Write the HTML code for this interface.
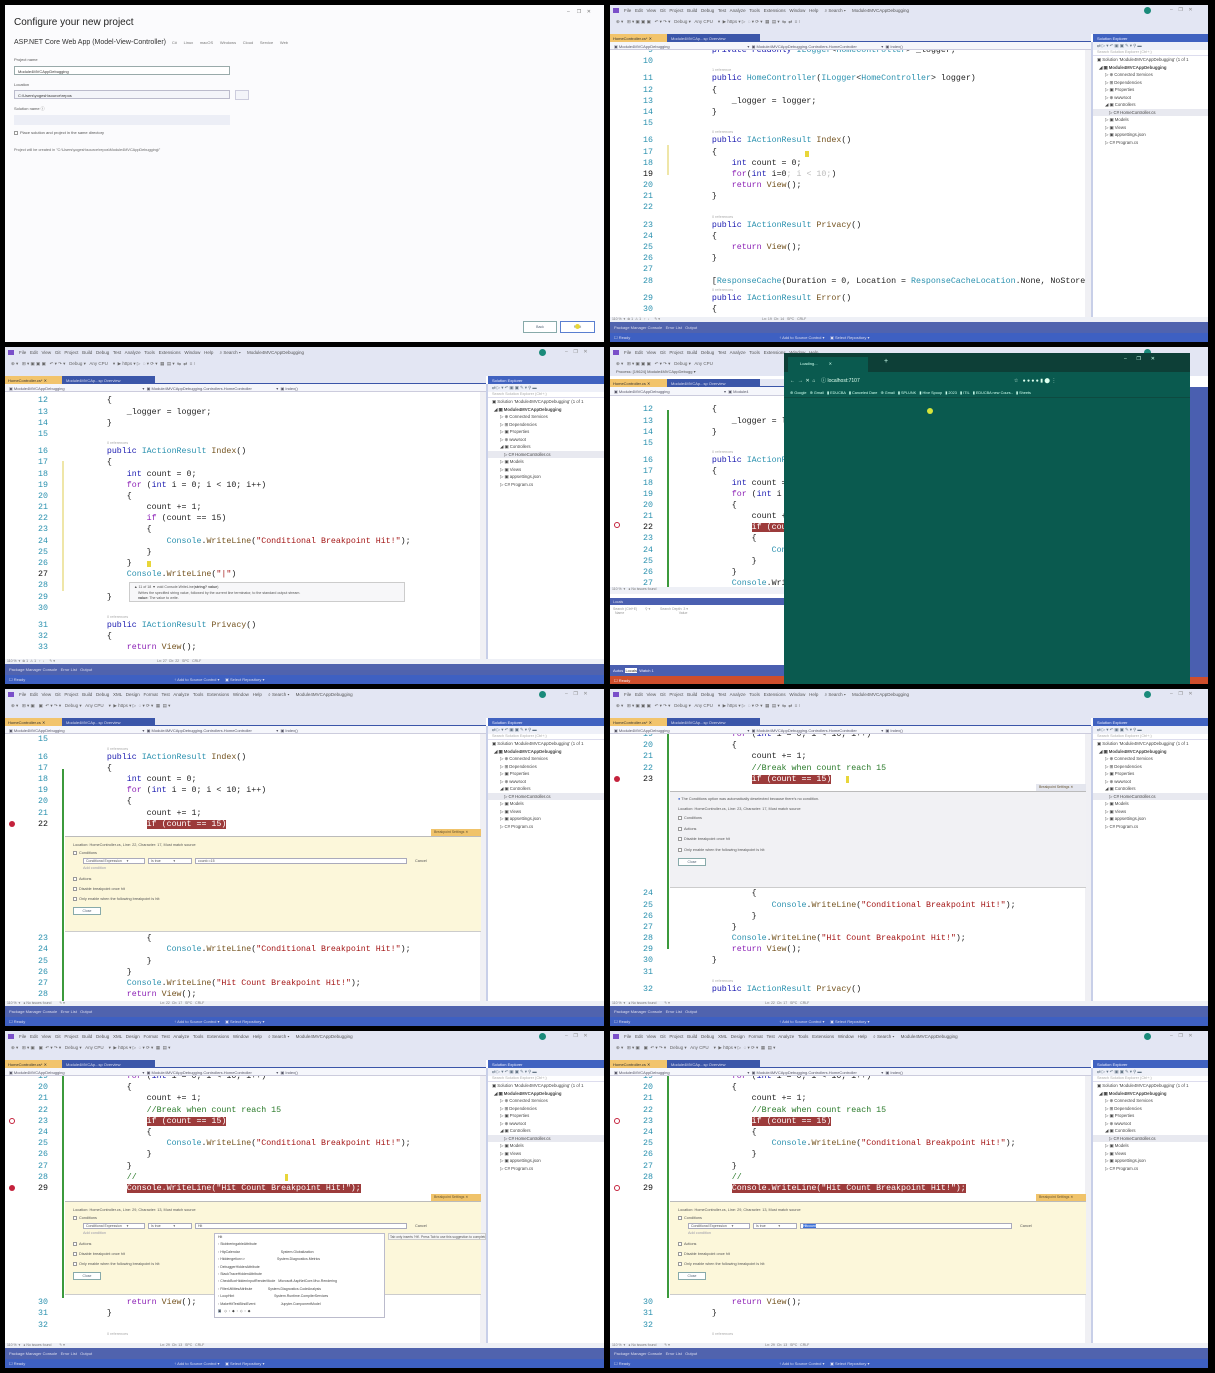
<!DOCTYPE html>
<html><head><meta charset="utf-8">
<style>
*{margin:0;padding:0;box-sizing:border-box}
body{width:1215px;height:1373px;background:#000;position:relative;overflow:hidden;font-family:"Liberation Sans",sans-serif}
.vs{position:absolute;width:599px;height:337px;background:#fff;overflow:hidden}
.menu{position:absolute;left:0;top:0;width:100%;height:29px;background:#e3e6f3}
.mt{position:absolute;left:14px;top:3px;font-size:4.5px;color:#555;white-space:pre}
.tt{position:absolute;left:6px;top:14px;font-size:4.5px;color:#666;white-space:pre}
.logo{position:absolute;left:3px;top:3px;width:6px;height:5px;background:#7a4fc9}
.av{position:absolute;left:534px;top:2px;width:7px;height:7px;border-radius:50%;background:#1a8a7a}
.wc{position:absolute;left:560px;top:2px;font-size:5px;color:#888;white-space:pre}
.tabs{position:absolute;left:0;top:29px;width:481px;height:8px;background:#e3e6f3;border-bottom:1px solid #3a55a8}
.t1{position:absolute;left:0;top:0;width:57px;height:8px;background:#f2c46c;font-size:4px;color:#333;padding:2px 3px;white-space:nowrap}
.t2{position:absolute;left:57px;top:0;width:93px;height:8px;background:#3b56a9;font-size:4px;color:#dde;padding:2px 4px;white-space:nowrap}
.seh{position:absolute;left:483px;top:29px;width:116px;height:8px;background:#4062c0;font-size:4px;color:#eef;padding:2px 4px}
.nav{position:absolute;left:0;top:37px;width:481px;height:8px;background:#f5f6fb;border-bottom:1px solid #ccd;font-size:4px;color:#556;white-space:pre;padding:2px 4px;overflow:hidden}
.ed{position:absolute;left:0;top:45px;width:481px;height:267px;background:#fff;overflow:hidden}
.vsb{position:absolute;right:0;top:0;width:6px;height:100%;background:#f0f0f4}
.sep{position:absolute;left:481px;top:37px;width:2px;height:275px;background:#c8cfe8}
.se{position:absolute;left:483px;top:37px;width:116px;height:275px;background:#fff;font-size:4.3px;color:#444;white-space:nowrap;overflow:hidden}
.se .tb2{height:8px;background:#eef0f8;padding:1px 4px;color:#678}
.se .sr{height:6px;border-bottom:1px solid #dde;color:#aaa;padding:0 4px;font-size:3.8px}
.se div.i{height:7.5px;line-height:7.5px}
.hs{position:absolute;left:0;top:312px;width:100%;height:5px;background:#eef0f6;font-size:3.5px;color:#777;white-space:pre;overflow:hidden}
.ob{position:absolute;left:0;top:317px;width:100%;height:11px;background:#5063ae;font-size:4px;color:#dde;padding:3px 4px;white-space:pre}
.sb{position:absolute;left:0;top:328px;width:100%;height:9px;background:#3e60c2;font-size:4px;color:#dde;padding:2px 4px;white-space:pre}
.code{position:absolute;left:0;font:8.3px/11.2px "Liberation Mono",monospace;color:#222;white-space:normal;width:481px}
.l{height:11.2px;padding-left:62px;position:relative;white-space:pre}
.n{position:absolute;left:0;width:43px;text-align:right;color:#2b91af}
.cl{height:6px;font:3.8px/6px "Liberation Sans",sans-serif;color:#aaa;padding-left:102px}
.k{color:#1a1ab0}.c2{color:#8b1fb5}.t{color:#2b91af}.s{color:#a31515}.m{color:#74531f}.g{color:#2a7a2a}
.bp{background:#9c3b3b;color:#fff}
.dot{position:absolute;left:4px;width:6px;height:6px;border-radius:50%;background:#c4223c}
.ring{position:absolute;left:4px;width:6px;height:6px;border-radius:50%;border:1.5px solid #c4223c;background:#fff}
.gb{position:absolute;left:57px;width:2px;background:#3c9a3c}
.yb{position:absolute;left:57px;width:2px;background:#efe6a8}
.pk{margin-left:60px;width:416px;background:#fcf7da;border-top:1px solid #bbb;border-bottom:1px solid #ccc;position:relative;font:3.8px "Liberation Sans",sans-serif;color:#555;white-space:normal}
.pk.gr{background:#f1f1f4}
.pk .x{position:absolute;left:8px;white-space:pre}
.bs{position:absolute;right:0;top:-8px;width:50px;height:7px;background:#f0c36a;font-size:3.5px;color:#653;padding:1.5px 3px;white-space:nowrap}
.cb{display:inline-block;width:4px;height:4px;border:0.6px solid #999;background:#fff;vertical-align:middle;margin-right:2px}
.btn{position:absolute;width:20px;height:8px;border:1px solid #8aa;background:#fff;font-size:3.5px;text-align:center;line-height:6px;color:#567}
.inp{position:absolute;height:6px;background:#fff;border:0.6px solid #aab;font-size:3.5px;line-height:5px;padding-left:2px;white-space:pre}
</style></head><body>

<!-- Panel 1: dialog -->
<div class="vs" style="left:5px;top:5px;background:#fbfbfd">
 <div style="position:absolute;left:562px;top:4px;font-size:5px;color:#777;white-space:pre">–     ❐    ✕</div>
 <div style="position:absolute;left:9px;top:12px;font-size:10px;color:#222">Configure your new project</div>
 <div style="position:absolute;left:9px;top:34px;font-size:7px;color:#333;white-space:pre">ASP.NET Core Web App (Model-View-Controller)   <span style="font-size:4px;color:#777">C#      Linux      macOS      Windows      Cloud      Service      Web</span></div>
 <div style="position:absolute;left:9px;top:52px;font-size:4px;color:#555">Project name</div>
 <div style="position:absolute;left:9px;top:61px;width:216px;height:9px;border:1px solid #9aa;background:#fff;font-size:4px;padding:2px 3px;color:#333">Module4MVCAppDebugging</div>
 <div style="position:absolute;left:9px;top:77px;font-size:4px;color:#555">Location</div>
 <div style="position:absolute;left:9px;top:85px;width:216px;height:9px;border:1px solid #bbc;background:#f3f4f9;font-size:4px;padding:2px 3px;color:#333">C:\Users\yogesh\source\repos</div>
 <div style="position:absolute;left:230px;top:85px;width:14px;height:10px;border:1px solid #ccd;background:#f3f4f9"></div>
 <div style="position:absolute;left:9px;top:101px;font-size:4px;color:#555">Solution name ⓘ</div>
 <div style="position:absolute;left:9px;top:110px;width:216px;height:10px;background:#eceef6"></div>
 <div style="position:absolute;left:9px;top:125px;font-size:4px;color:#555"><span class="cb"></span>Place solution and project in the same directory</div>
 <div style="position:absolute;left:9px;top:143px;font-size:3.8px;color:#666">Project will be created in "C:\Users\yogesh\source\repos\Module4MVCAppDebugging\"</div>
 <div class="btn" style="left:518px;top:316px;width:34px;height:12px;line-height:10px">Back</div>
 <div class="btn" style="left:555px;top:316px;width:35px;height:12px;line-height:10px;border-color:#5a7fd0">Next</div>
 <div style="position:absolute;left:570px;top:319px;width:5px;height:5px;border-radius:50%;background:#e8d63a"></div>
</div>

<!-- Panel 2 -->
<div class="vs" style="left:610px;top:5px;width:598px">
 <div class="menu"><div class="logo"></div><div class="mt">File   Edit   View   Git   Project   Build   Debug   Test   Analyze   Tools   Extensions   Window   Help     ⌕ Search ▾     Module4MVCAppDebugging</div><div class="tt">⊕ ▾   ⊞ ▾ ▣ ▣ ▣   ↶ ▾ ↷ ▾   Debug ▾   Any CPU    ▾  ▶ https ▾ ▷  ◌ ▾ ⟳ ▾  ▦  ▤ ▾  ⇆  ⇄  ≡ ⁝</div><div class="av"></div><div class="wc">–    ❐    ✕</div></div>
 <div class="tabs"><div class="t1">HomeController.cs*  ✕</div><div class="t2">Module4MVCAp...sp Overview</div></div>
 <div class="seh">Solution Explorer</div>
 <div class="nav">▣ Module4MVCAppDebugging                                                                      ▾  ▣ Module4MVCAppDebugging.Controllers.HomeController                      ▾  ▣ Index()</div>
 <div class="ed"><div class="vsb"></div><div class="yb" style="top:95px;height:30px"></div>
  <div class="code" style="top:-5px">
<div class="l"><span class="n">9</span>        <span class="k">private readonly</span> <span class="t">ILogger</span>&lt;<span class="t">HomeController</span>&gt; _logger;</div>
<div class="l"><span class="n">10</span></div>
<div class="cl">1 reference</div>
<div class="l"><span class="n">11</span>        <span class="k">public</span> <span class="t">HomeController</span>(<span class="t">ILogger</span>&lt;<span class="t">HomeController</span>&gt; logger)</div>
<div class="l"><span class="n">12</span>        {</div>
<div class="l"><span class="n">13</span>            _logger = logger;</div>
<div class="l"><span class="n">14</span>        }</div>
<div class="l"><span class="n">15</span></div>
<div class="cl">0 references</div>
<div class="l"><span class="n">16</span>        <span class="k">public</span> <span class="t">IActionResult</span> <span class="m">Index</span>()</div>
<div class="l"><span class="n">17</span>        {</div>
<div class="l"><span class="n">18</span>            <span class="k">int</span> count = 0;</div>
<div class="l"><span class="n" style="color:#111">19</span>            <span class="c2">for</span>(<span class="k">int</span> i=0<span style="color:#bbb">; i &lt; 10;</span>)</div>
<div class="l"><span class="n">20</span>            <span class="c2">return</span> <span class="m">View</span>();</div>
<div class="l"><span class="n">21</span>        }</div>
<div class="l"><span class="n">22</span></div>
<div class="cl">0 references</div>
<div class="l"><span class="n">23</span>        <span class="k">public</span> <span class="t">IActionResult</span> <span class="m">Privacy</span>()</div>
<div class="l"><span class="n">24</span>        {</div>
<div class="l"><span class="n">25</span>            <span class="c2">return</span> <span class="m">View</span>();</div>
<div class="l"><span class="n">26</span>        }</div>
<div class="l"><span class="n">27</span></div>
<div class="l"><span class="n">28</span>        [<span class="t">ResponseCache</span>(Duration = 0, Location = <span class="t">ResponseCacheLocation</span>.None, NoStore</div>
<div class="cl">0 references</div>
<div class="l"><span class="n">29</span>        <span class="k">public</span> <span class="t">IActionResult</span> <span class="m">Error</span>()</div>
<div class="l"><span class="n">30</span>        {</div>
  </div>
  <div style="position:absolute;left:195px;top:101px;width:4px;height:6px;background:#e8d63a"></div>
 </div>
 <div class="sep"></div>
 <div class="se"><div class="tb2">⇄ ▷ ▾ ↶ ▣ ▣  ✎ ▾  ⚲ ▬</div><div class="sr">Search Solution Explorer (Ctrl+;)</div>
  <div class="i" style="padding-left:4px">▣ Solution 'Module4MVCAppDebugging' (1 of 1</div>
  <div class="i" style="padding-left:6px;font-weight:bold">◢ ▣ Module4MVCAppDebugging</div>
  <div class="i" style="padding-left:12px">▷ ⊕ Connected Services</div>
  <div class="i" style="padding-left:12px">▷ ⊞ Dependencies</div>
  <div class="i" style="padding-left:12px">▷ ▣ Properties</div>
  <div class="i" style="padding-left:12px">▷ ⊕ wwwroot</div>
  <div class="i" style="padding-left:12px">◢ ▣ Controllers</div>
  <div class="i" style="padding-left:16px;background:#e8e9f0">▷ C# HomeController.cs</div>
  <div class="i" style="padding-left:12px">▷ ▣ Models</div>
  <div class="i" style="padding-left:12px">▷ ▣ Views</div>
  <div class="i" style="padding-left:12px">▷ ▣ appsettings.json</div>
  <div class="i" style="padding-left:12px">▷ C# Program.cs</div>
 </div>
 <div class="hs">  110 %  ▾  ⊗ 1  ⚠ 1   ↑  ↓     ✎ ▾                                                                                                         Ln: 19  Ch: 14   SPC   CRLF</div>
 <div class="ob">Package Manager Console   Error List   Output</div>
 <div class="sb">☐ Ready                                                                                                                                      ↑ Add to Source Control ▾     ▣ Select Repository ▾</div>
</div>

<!-- Panel 3 -->
<div class="vs" style="left:5px;top:347px">
 <div class="menu"><div class="logo"></div><div class="mt">File   Edit   View   Git   Project   Build   Debug   Test   Analyze   Tools   Extensions   Window   Help     ⌕ Search ▾     Module4MVCAppDebugging</div><div class="tt">⊕ ▾   ⊞ ▾ ▣ ▣ ▣   ↶ ▾ ↷ ▾   Debug ▾   Any CPU    ▾  ▶ https ▾ ▷  ◌ ▾ ⟳ ▾  ▦  ▤ ▾  ⇆  ⇄  ≡ ⁝</div><div class="av"></div><div class="wc">–    ❐    ✕</div></div>
 <div class="tabs"><div class="t1">HomeController.cs*  ✕</div><div class="t2">Module4MVCAp...sp Overview</div></div>
 <div class="seh">Solution Explorer</div>
 <div class="nav">▣ Module4MVCAppDebugging                                                                      ▾  ▣ Module4MVCAppDebugging.Controllers.HomeController                      ▾  ▣ Index()</div>
 <div class="ed"><div class="vsb"></div><div class="yb" style="top:69px;height:130px"></div>
  <div class="code" style="top:3.4px">
<div class="l"><span class="n">12</span>        {</div>
<div class="l"><span class="n">13</span>            _logger = logger;</div>
<div class="l"><span class="n">14</span>        }</div>
<div class="l"><span class="n">15</span></div>
<div class="cl">0 references</div>
<div class="l"><span class="n">16</span>        <span class="k">public</span> <span class="t">IActionResult</span> <span class="m">Index</span>()</div>
<div class="l"><span class="n">17</span>        {</div>
<div class="l"><span class="n">18</span>            <span class="k">int</span> count = 0;</div>
<div class="l"><span class="n">19</span>            <span class="c2">for</span> (<span class="k">int</span> i = 0; i &lt; 10; i++)</div>
<div class="l"><span class="n">20</span>            {</div>
<div class="l"><span class="n">21</span>                count += 1;</div>
<div class="l"><span class="n">22</span>                <span class="c2">if</span> (count == 15)</div>
<div class="l"><span class="n">23</span>                {</div>
<div class="l"><span class="n">24</span>                    <span class="t">Console</span>.<span class="m">WriteLine</span>(<span class="s">"Conditional Breakpoint Hit!"</span>);</div>
<div class="l"><span class="n">25</span>                }</div>
<div class="l"><span class="n">26</span>            }</div>
<div class="l"><span class="n" style="color:#111">27</span>            <span class="t">Console</span>.<span class="m">WriteLine</span>(<span class="s">"|"</span>)</div>
<div class="l"><span class="n">28</span></div>
<div class="l"><span class="n">29</span>        }</div>
<div class="l"><span class="n">30</span></div>
<div class="cl">0 references</div>
<div class="l"><span class="n">31</span>        <span class="k">public</span> <span class="t">IActionResult</span> <span class="m">Privacy</span>()</div>
<div class="l"><span class="n">32</span>        {</div>
<div class="l"><span class="n">33</span>            <span class="c2">return</span> <span class="m">View</span>();</div>
  </div>
  <div style="position:absolute;left:124px;top:190px;width:276px;height:20px;background:#f7f7f9;border:1px solid #ccc;font-size:3.6px;color:#555;padding:2px 4px;line-height:5.5px;white-space:pre">▲ 11 of 18 ▼ void Console.WriteLine(<b>string? value</b>)
    Writes the specified string value, followed by the current line terminator, to the standard output stream.
    <b>value:</b> The value to write.</div>
  <div style="position:absolute;left:142px;top:169px;width:4px;height:6px;background:#e8d63a"></div>
 </div>
 <div class="sep"></div>
 <div class="se"><div class="tb2">⇄ ▷ ▾ ↶ ▣ ▣  ✎ ▾  ⚲ ▬</div><div class="sr">Search Solution Explorer (Ctrl+;)</div>
  <div class="i" style="padding-left:4px">▣ Solution 'Module4MVCAppDebugging' (1 of 1</div>
  <div class="i" style="padding-left:6px;font-weight:bold">◢ ▣ Module4MVCAppDebugging</div>
  <div class="i" style="padding-left:12px">▷ ⊕ Connected Services</div>
  <div class="i" style="padding-left:12px">▷ ⊞ Dependencies</div>
  <div class="i" style="padding-left:12px">▷ ▣ Properties</div>
  <div class="i" style="padding-left:12px">▷ ⊕ wwwroot</div>
  <div class="i" style="padding-left:12px">◢ ▣ Controllers</div>
  <div class="i" style="padding-left:16px;background:#e8e9f0">▷ C# HomeController.cs</div>
  <div class="i" style="padding-left:12px">▷ ▣ Models</div>
  <div class="i" style="padding-left:12px">▷ ▣ Views</div>
  <div class="i" style="padding-left:12px">▷ ▣ appsettings.json</div>
  <div class="i" style="padding-left:12px">▷ C# Program.cs</div>
 </div>
 <div class="hs">  110 %  ▾  ⊗ 1  ⚠ 1   ↑  ↓     ✎ ▾                                                                                                         Ln: 27  Ch: 22   SPC   CRLF</div>
 <div class="ob">Package Manager Console   Error List   Output</div>
 <div class="sb">☐ Ready                                                                                                                                      ↑ Add to Source Control ▾     ▣ Select Repository ▾</div>
</div>

<!-- Panel 4 -->
<div class="vs" style="left:610px;top:347px;width:598px">
 <div class="menu"><div class="logo"></div><div class="mt">File   Edit   View   Git   Project   Build   Debug   Test   Analyze   Tools   Extensions   Window   Help</div><div class="tt">⊕ ▾   ⊞ ▾ ▣ ▣ ▣   ↶ ▾ ↷ ▾   Debug ▾   Any CPU</div><div class="av"></div></div>
 <div style="position:absolute;left:0;top:22px;width:200px;height:7px;font-size:4px;color:#555;padding-left:6px;background:#e3e6f3">Process: [19624] Module4MVCAppDebugg ▾</div>
 <div class="tabs" style="top:32px"><div class="t1">HomeController.cs  ✕</div><div class="t2">Module4MVCAp...sp Overview</div></div>
 <div class="nav" style="top:40px;height:9px">▣ Module4MVCAppDebugging                                                 ▾  ▣ Module4</div>
 <div class="ed" style="top:49px;height:191px"><div class="gb" style="top:14px;height:180px"></div>
  <div class="code" style="top:8.4px">
<div class="l"><span class="n">12</span>        {</div>
<div class="l"><span class="n">13</span>            _logger = logger;</div>
<div class="l"><span class="n">14</span>        }</div>
<div class="l"><span class="n">15</span></div>
<div class="cl">0 references</div>
<div class="l"><span class="n">16</span>        <span class="k">public</span> <span class="t">IActionResult</span> Index()</div>
<div class="l"><span class="n">17</span>        {</div>
<div class="l"><span class="n">18</span>            <span class="k">int</span> count = 0;</div>
<div class="l"><span class="n">19</span>            <span class="c2">for</span> (<span class="k">int</span> i = 0;</div>
<div class="l"><span class="n">20</span>            {</div>
<div class="l"><span class="n">21</span>                count += 1;</div>
<div class="l"><span class="n" style="color:#111">22</span>                <span class="bp">if (count == 15)</span></div>
<div class="l"><span class="n">23</span>                {</div>
<div class="l"><span class="n">24</span>                    <span class="t">Console</span></div>
<div class="l"><span class="n">25</span>                }</div>
<div class="l"><span class="n">26</span>            }</div>
<div class="l"><span class="n">27</span>            <span class="t">Console</span>.WriteLine</div>
  </div>
  <div class="ring" style="top:126px"></div>
 </div>
 <div class="hs" style="top:240px;height:7px">  110 %  ▾   ● No issues found</div>
 <div style="position:absolute;left:0;top:251px;width:598px;height:7px;background:#4a5fb0;font-size:3.5px;color:#dde;padding:1.5px 3px">Locals</div>
 <div style="position:absolute;left:0;top:258px;width:598px;height:60px;background:#fff;font-size:3.5px;color:#999;white-space:pre;padding:2px 3px">Search (Ctrl+E)        ⚲ ▾          Search Depth: 3 ▾
  Name                                                        Value</div>
 <div style="position:absolute;left:0;top:318px;width:598px;height:11px;background:#4a5fb0;font-size:4px;color:#eef;padding:3px 3px;white-space:pre">Autos  <span style="background:#fff;color:#333">Locals</span>  Watch 1</div>
 <div style="position:absolute;left:0;top:329px;width:598px;height:8px;background:#cf4e2c;font-size:4px;color:#fee;padding:2px 4px">☐ Ready</div>
 <div style="position:absolute;left:580px;top:40px;width:18px;height:290px;background:#4a5fb0"></div>
 <!-- browser -->
 <div style="position:absolute;left:174px;top:6px;width:406px;height:331px;background:#0a5a4f">
  <div style="height:19px;background:#0d3f37;position:relative">
   <div style="position:absolute;left:4px;top:4px;width:80px;height:15px;background:#0a5a4f;font-size:4px;color:#cfe;padding:4px 12px;white-space:pre">Loading...          ✕</div>
   <div style="position:absolute;left:100px;top:5px;font-size:7px;color:#cfe">+</div>
   <div style="position:absolute;left:340px;top:3px;font-size:5px;color:#cfe;white-space:pre">–       ❐       ✕</div>
  </div>
  <div style="height:15px;position:relative;font-size:5px;color:#dfe;white-space:pre;padding:5px 6px">←  →  ✕  ⌂    ⓘ localhost:7107                                                                                                               ☆   ● ● ● ● ▮ ⬤ ⋮</div>
  <div style="height:11px;font-size:3.8px;color:#cfe;white-space:pre;padding:3px 6px;border-bottom:1px solid #0d4a40">⊕ Google   ⊕ Gmail   ▮ EDUCBA   ▮ Canceled Dare   ⊕ Gmail   ▮ SPLUNK   ▮ Hive Spoop   ▮ 2023   ▮ ITIL   ▮ EDUCBA new Cours..   ▮ Sheets</div>
  <div style="position:absolute;left:143px;top:55px;width:6px;height:6px;border-radius:50%;background:#d6e43a"></div>
 </div>
</div>

<!-- Panel 5 -->
<div class="vs" style="left:5px;top:689px">
 <div class="menu"><div class="logo"></div><div class="mt">File   Edit   View   Git   Project   Build   Debug   XML   Design   Format   Test   Analyze   Tools   Extensions   Window   Help     ⌕ Search ▾     Module4MVCAppDebugging</div><div class="tt">⊕ ▾   ⊞ ▾ ▣   ▣  ↶ ▾ ↷ ▾   Debug ▾   Any CPU    ▾  ▶ https ▾ ▷  ◌ ▾ ⟳ ▾  ▦  ▤ ▾</div><div class="av"></div><div class="wc">–    ❐    ✕</div></div>
 <div class="tabs"><div class="t1">HomeController.cs  ✕</div><div class="t2">Module4MVCAp...sp Overview</div></div>
 <div class="seh">Solution Explorer</div>
 <div class="nav">▣ Module4MVCAppDebugging                                                                      ▾  ▣ Module4MVCAppDebugging.Controllers.HomeController                      ▾  ▣ Index()</div>
 <div class="ed"><div class="vsb"></div><div class="gb" style="top:35px;height:232px"></div>
  <div class="code" style="top:0.4px">
<div class="l"><span class="n">15</span></div>
<div class="cl">0 references</div>
<div class="l"><span class="n">16</span>        <span class="k">public</span> <span class="t">IActionResult</span> <span class="m">Index</span>()</div>
<div class="l"><span class="n">17</span>        {</div>
<div class="l"><span class="n">18</span>            <span class="k">int</span> count = 0;</div>
<div class="l"><span class="n">19</span>            <span class="c2">for</span> (<span class="k">int</span> i = 0; i &lt; 10; i++)</div>
<div class="l"><span class="n">20</span>            {</div>
<div class="l"><span class="n">21</span>                count += 1;</div>
<div class="l"><span class="n" style="color:#111">22</span>                <span class="bp">if (count == 15)</span></div>
<div style="height:6px"></div>
<div class="pk" style="height:96px"><div class="bs">Breakpoint Settings ✕</div>
<div class="x" style="top:6px">Location: HomeController.cs, Line: 22, Character: 17, Must match source</div>
<div class="x" style="top:14px"><span class="cb"></span>Conditions</div>
<div class="inp" style="left:18px;top:21px;width:62px">Conditional Expression     ▾</div>
<div class="inp" style="left:83px;top:21px;width:44px">Is true             ▾</div>
<div class="inp" style="left:130px;top:21px;width:212px">count==15</div>
<div class="x" style="left:350px;top:22px">Cancel</div>
<div class="x" style="left:18px;top:29px;color:#99a">Add condition</div>
<div class="x" style="top:40px"><span class="cb"></span>Actions</div>
<div class="x" style="top:50px"><span class="cb"></span>Disable breakpoint once hit</div>
<div class="x" style="top:60px"><span class="cb"></span>Only enable when the following breakpoint is hit:</div>
<div class="btn" style="left:8px;top:70px;width:28px">Close</div>
</div>
<div style="height:1.4px"></div>
<div class="l"><span class="n">23</span>                {</div>
<div class="l"><span class="n">24</span>                    <span class="t">Console</span>.<span class="m">WriteLine</span>(<span class="s">"Conditional Breakpoint Hit!"</span>);</div>
<div class="l"><span class="n">25</span>                }</div>
<div class="l"><span class="n">26</span>            }</div>
<div class="l"><span class="n">27</span>            <span class="t">Console</span>.<span class="m">WriteLine</span>(<span class="s">"Hit Count Breakpoint Hit!"</span>);</div>
<div class="l"><span class="n">28</span>            <span class="c2">return</span> <span class="m">View</span>();</div>
  </div>
  <div class="dot" style="top:87px"></div>
 </div>
 <div class="sep"></div>
 <div class="se"><div class="tb2">⇄ ▷ ▾ ↶ ▣ ▣  ✎ ▾  ⚲ ▬</div><div class="sr">Search Solution Explorer (Ctrl+;)</div>
  <div class="i" style="padding-left:4px">▣ Solution 'Module4MVCAppDebugging' (1 of 1</div>
  <div class="i" style="padding-left:6px;font-weight:bold">◢ ▣ Module4MVCAppDebugging</div>
  <div class="i" style="padding-left:12px">▷ ⊕ Connected Services</div>
  <div class="i" style="padding-left:12px">▷ ⊞ Dependencies</div>
  <div class="i" style="padding-left:12px">▷ ▣ Properties</div>
  <div class="i" style="padding-left:12px">▷ ⊕ wwwroot</div>
  <div class="i" style="padding-left:12px">◢ ▣ Controllers</div>
  <div class="i" style="padding-left:16px;background:#e8e9f0">▷ C# HomeController.cs</div>
  <div class="i" style="padding-left:12px">▷ ▣ Models</div>
  <div class="i" style="padding-left:12px">▷ ▣ Views</div>
  <div class="i" style="padding-left:12px">▷ ▣ appsettings.json</div>
  <div class="i" style="padding-left:12px">▷ C# Program.cs</div>
 </div>
 <div class="hs">  110 %  ▾   ● No issues found        ✎ ▾                                                                                                  Ln: 22  Ch: 17   SPC   CRLF</div>
 <div class="ob">Package Manager Console   Error List   Output</div>
 <div class="sb">☐ Ready                                                                                                                                      ↑ Add to Source Control ▾     ▣ Select Repository ▾</div>
</div>

<!-- Panel 6 -->
<div class="vs" style="left:610px;top:689px;width:598px">
 <div class="menu"><div class="logo"></div><div class="mt">File   Edit   View   Git   Project   Build   Debug   Test   Analyze   Tools   Extensions   Window   Help     ⌕ Search ▾     Module4MVCAppDebugging</div><div class="tt">⊕ ▾   ⊞ ▾ ▣ ▣ ▣   ↶ ▾ ↷ ▾   Debug ▾   Any CPU    ▾  ▶ https ▾ ▷  ◌ ▾ ⟳ ▾  ▦  ▤ ▾  ⇆  ⇄  ≡ ⁝</div><div class="av"></div><div class="wc">–    ❐    ✕</div></div>
 <div class="tabs"><div class="t1">HomeController.cs*  ✕</div><div class="t2">Module4MVCAp...sp Overview</div></div>
 <div class="seh">Solution Explorer</div>
 <div class="nav">▣ Module4MVCAppDebugging                                                                      ▾  ▣ Module4MVCAppDebugging.Controllers.HomeController                      ▾  ▣ Index()</div>
 <div class="ed"><div class="vsb"></div><div class="gb" style="top:0px;height:215px"></div>
  <div class="code" style="top:-5px">
<div class="l"><span class="n">19</span>            <span class="c2">for</span> (<span class="k">int</span> i = 0; i &lt; 10; i++)</div>
<div class="l"><span class="n">20</span>            {</div>
<div class="l"><span class="n">21</span>                count += 1;</div>
<div class="l"><span class="n">22</span>                <span class="g">//Break when count reach 15</span></div>
<div class="l"><span class="n" style="color:#111">23</span>                <span class="bp">if (count == 15)</span></div>
<div style="height:6px"></div>
<div class="pk gr" style="height:97px"><div class="bs" style="background:#e4e6ee">Breakpoint Settings ✕</div>
<div class="x" style="top:5px"><span style="color:#2a5bd0">●</span> The Conditions option was automatically deselected because there's no condition.</div>
<div class="x" style="top:15px">Location: HomeController.cs, Line: 23, Character: 17, Must match source</div>
<div class="x" style="top:24px"><span class="cb"></span>Conditions</div>
<div class="x" style="top:35px"><span class="cb"></span>Actions</div>
<div class="x" style="top:45px"><span class="cb"></span>Disable breakpoint once hit</div>
<div class="x" style="top:56px"><span class="cb"></span>Only enable when the following breakpoint is hit:</div>
<div class="btn" style="left:8px;top:66px;width:28px">Close</div>
</div>
<div style="height:0.4px"></div>
<div class="l"><span class="n">24</span>                {</div>
<div class="l"><span class="n">25</span>                    <span class="t">Console</span>.<span class="m">WriteLine</span>(<span class="s">"Conditional Breakpoint Hit!"</span>);</div>
<div class="l"><span class="n">26</span>                }</div>
<div class="l"><span class="n">27</span>            }</div>
<div class="l"><span class="n">28</span>            <span class="t">Console</span>.<span class="m">WriteLine</span>(<span class="s">"Hit Count Breakpoint Hit!"</span>);</div>
<div class="l"><span class="n">29</span>            <span class="c2">return</span> <span class="m">View</span>();</div>
<div class="l"><span class="n">30</span>        }</div>
<div class="l"><span class="n">31</span></div>
<div class="cl">0 references</div>
<div class="l"><span class="n">32</span>        <span class="k">public</span> <span class="t">IActionResult</span> <span class="m">Privacy</span>()</div>
  </div>
  <div class="dot" style="top:42px"></div>
  <div style="position:absolute;left:236px;top:42px;width:3px;height:7px;background:#e8d63a"></div>
 </div>
 <div class="sep"></div>
 <div class="se"><div class="tb2">⇄ ▷ ▾ ↶ ▣ ▣  ✎ ▾  ⚲ ▬</div><div class="sr">Search Solution Explorer (Ctrl+;)</div>
  <div class="i" style="padding-left:4px">▣ Solution 'Module4MVCAppDebugging' (1 of 1</div>
  <div class="i" style="padding-left:6px;font-weight:bold">◢ ▣ Module4MVCAppDebugging</div>
  <div class="i" style="padding-left:12px">▷ ⊕ Connected Services</div>
  <div class="i" style="padding-left:12px">▷ ⊞ Dependencies</div>
  <div class="i" style="padding-left:12px">▷ ▣ Properties</div>
  <div class="i" style="padding-left:12px">▷ ⊕ wwwroot</div>
  <div class="i" style="padding-left:12px">◢ ▣ Controllers</div>
  <div class="i" style="padding-left:16px;background:#e8e9f0">▷ C# HomeController.cs</div>
  <div class="i" style="padding-left:12px">▷ ▣ Models</div>
  <div class="i" style="padding-left:12px">▷ ▣ Views</div>
  <div class="i" style="padding-left:12px">▷ ▣ appsettings.json</div>
  <div class="i" style="padding-left:12px">▷ C# Program.cs</div>
 </div>
 <div class="hs">  110 %  ▾   ● No issues found        ✎ ▾                                                                                                  Ln: 22  Ch: 17   SPC   CRLF</div>
 <div class="ob">Package Manager Console   Error List   Output</div>
 <div class="sb">☐ Ready                                                                                                                                      ↑ Add to Source Control ▾     ▣ Select Repository ▾</div>
</div>

<!-- Panel 7 -->
<div class="vs" style="left:5px;top:1031px">
 <div class="menu"><div class="logo"></div><div class="mt">File   Edit   View   Git   Project   Build   Debug   XML   Design   Format   Test   Analyze   Tools   Extensions   Window   Help     ⌕ Search ▾     Module4MVCAppDebugging</div><div class="tt">⊕ ▾   ⊞ ▾ ▣   ▣  ↶ ▾ ↷ ▾   Debug ▾   Any CPU    ▾  ▶ https ▾ ▷  ◌ ▾ ⟳ ▾  ▦  ▤ ▾</div><div class="av"></div><div class="wc">–    ❐    ✕</div></div>
 <div class="tabs"><div class="t1">HomeController.cs*  ✕</div><div class="t2">Module4MVCAp...sp Overview</div></div>
 <div class="seh">Solution Explorer</div>
 <div class="nav">▣ Module4MVCAppDebugging                                                                      ▾  ▣ Module4MVCAppDebugging.Controllers.HomeController                      ▾  ▣ Index()</div>
 <div class="ed"><div class="vsb"></div><div class="gb" style="top:0px;height:222px"></div>
  <div class="code" style="top:-5px">
<div class="l"><span class="n">19</span>            <span class="c2">for</span> (<span class="k">int</span> i = 0; i &lt; 10; i++)</div>
<div class="l"><span class="n">20</span>            {</div>
<div class="l"><span class="n">21</span>                count += 1;</div>
<div class="l"><span class="n">22</span>                <span class="g">//Break when count reach 15</span></div>
<div class="l"><span class="n">23</span>                <span class="bp">if (count == 15)</span></div>
<div class="l"><span class="n">24</span>                {</div>
<div class="l"><span class="n">25</span>                    <span class="t">Console</span>.<span class="m">WriteLine</span>(<span class="s">"Conditional Breakpoint Hit!"</span>);</div>
<div class="l"><span class="n">26</span>                }</div>
<div class="l"><span class="n">27</span>            }</div>
<div class="l"><span class="n">28</span>            <span class="g">//</span></div>
<div class="l"><span class="n" style="color:#111">29</span>            <span class="bp">Console.WriteLine("Hit Count Breakpoint Hit!");</span></div>
<div style="height:6.8px"></div>
<div class="pk" style="height:94px"><div class="bs">Breakpoint Settings ✕</div>
<div class="x" style="top:6px">Location: HomeController.cs, Line: 29, Character: 13, Must match source</div>
<div class="x" style="top:14px"><span class="cb"></span>Conditions</div>
<div class="inp" style="left:18px;top:21px;width:62px">Conditional Expression     ▾</div>
<div class="inp" style="left:83px;top:21px;width:44px">Is true             ▾</div>
<div class="inp" style="left:130px;top:21px;width:212px">Hit</div>
<div class="x" style="left:350px;top:22px">Cancel</div>
<div class="x" style="left:18px;top:29px;color:#99a">Add condition</div>
<div class="x" style="top:40px"><span class="cb"></span>Actions</div>
<div class="x" style="top:50px"><span class="cb"></span>Disable breakpoint once hit</div>
<div class="x" style="top:60px"><span class="cb"></span>Only enable when the following breakpoint is hit:</div>
<div class="btn" style="left:8px;top:70px;width:28px">Close</div>
</div>
<div style="height:2.4px"></div>
<div class="l"><span class="n">30</span>            <span class="c2">return</span> <span class="m">View</span>();</div>
<div class="l"><span class="n">31</span>        }</div>
<div class="l"><span class="n">32</span></div>
<div class="cl">0 references</div>
  </div>
  <div class="ring" style="top:42px"></div>
  <div class="dot" style="top:109px"></div>
  <div style="position:absolute;left:280px;top:98px;width:3px;height:7px;background:#e8d63a"></div>
  <div style="position:absolute;left:209px;top:157px;width:171px;height:85px;background:#fff;border:1px solid #bbc;font-size:3.5px;color:#444;white-space:pre;line-height:7.4px;padding:0 3px">Hit
▫ StobberingableAttribute
▫ HtpCalendar                                          System.Globalization
▫ Hiddengetion&lt;&gt;                                 System.Diagnostics.Metrics
▫ DebuggerHiddenAttribute
▫ StackTraceHiddenAttribute
▫ CheckBoxHiddenInputRenderMode   Microsoft.AspNetCore.Mvc.Rendering
▫ FilterUtilitiesAttribute                System.Diagnostics.CodeAnalysis
▫ LoopHint                                         System.Runtime.CompilerServices
▫ MakeHitTestBindEvent                          Jupyter.ComponentModel
<span style="background:#cde">▣</span>   ◇  ▫  ◆  ▫  ◇  ▫  ◆</div>
  <div style="position:absolute;left:383px;top:157px;width:98px;height:7px;background:#f6f6f6;border:1px solid #ccc;font-size:3.3px;color:#555;white-space:nowrap;overflow:hidden;padding:1px">Tab only inserts 'Hit'. Press Tab to use this suggestion to complete your code. Press Ctrl+Alt+Space to leave.</div>
 </div>
 <div class="sep"></div>
 <div class="se"><div class="tb2">⇄ ▷ ▾ ↶ ▣ ▣  ✎ ▾  ⚲ ▬</div><div class="sr">Search Solution Explorer (Ctrl+;)</div>
  <div class="i" style="padding-left:4px">▣ Solution 'Module4MVCAppDebugging' (1 of 1</div>
  <div class="i" style="padding-left:6px;font-weight:bold">◢ ▣ Module4MVCAppDebugging</div>
  <div class="i" style="padding-left:12px">▷ ⊕ Connected Services</div>
  <div class="i" style="padding-left:12px">▷ ⊞ Dependencies</div>
  <div class="i" style="padding-left:12px">▷ ▣ Properties</div>
  <div class="i" style="padding-left:12px">▷ ⊕ wwwroot</div>
  <div class="i" style="padding-left:12px">◢ ▣ Controllers</div>
  <div class="i" style="padding-left:16px;background:#e8e9f0">▷ C# HomeController.cs</div>
  <div class="i" style="padding-left:12px">▷ ▣ Models</div>
  <div class="i" style="padding-left:12px">▷ ▣ Views</div>
  <div class="i" style="padding-left:12px">▷ ▣ appsettings.json</div>
  <div class="i" style="padding-left:12px">▷ C# Program.cs</div>
 </div>
 <div class="hs">  110 %  ▾   ● No issues found        ✎ ▾                                                                                                  Ln: 29  Ch: 13   SPC   CRLF</div>
 <div class="ob">Package Manager Console   Error List   Output</div>
 <div class="sb">☐ Ready                                                                                                                                      ↑ Add to Source Control ▾     ▣ Select Repository ▾</div>
</div>

<!-- Panel 8 -->
<div class="vs" style="left:610px;top:1031px;width:598px">
 <div class="menu"><div class="logo"></div><div class="mt">File   Edit   View   Git   Project   Build   Debug   XML   Design   Format   Test   Analyze   Tools   Extensions   Window   Help     ⌕ Search ▾     Module4MVCAppDebugging</div><div class="tt">⊕ ▾   ⊞ ▾ ▣   ▣  ↶ ▾ ↷ ▾   Debug ▾   Any CPU    ▾  ▶ https ▾ ▷  ◌ ▾ ⟳ ▾  ▦  ▤ ▾</div><div class="av"></div><div class="wc">–    ❐    ✕</div></div>
 <div class="tabs"><div class="t1">HomeController.cs  ✕</div><div class="t2">Module4MVCAp...sp Overview</div></div>
 <div class="seh">Solution Explorer</div>
 <div class="nav">▣ Module4MVCAppDebugging                                                                      ▾  ▣ Module4MVCAppDebugging.Controllers.HomeController                      ▾  ▣ Index()</div>
 <div class="ed"><div class="vsb"></div><div class="gb" style="top:0px;height:222px"></div>
  <div class="code" style="top:-5px">
<div class="l"><span class="n">19</span>            <span class="c2">for</span> (<span class="k">int</span> i = 0; i &lt; 10; i++)</div>
<div class="l"><span class="n">20</span>            {</div>
<div class="l"><span class="n">21</span>                count += 1;</div>
<div class="l"><span class="n">22</span>                <span class="g">//Break when count reach 15</span></div>
<div class="l"><span class="n">23</span>                <span class="bp">if (count == 15)</span></div>
<div class="l"><span class="n">24</span>                {</div>
<div class="l"><span class="n">25</span>                    <span class="t">Console</span>.<span class="m">WriteLine</span>(<span class="s">"Conditional Breakpoint Hit!"</span>);</div>
<div class="l"><span class="n">26</span>                }</div>
<div class="l"><span class="n">27</span>            }</div>
<div class="l"><span class="n">28</span>            <span class="g">//</span></div>
<div class="l"><span class="n" style="color:#111">29</span>            <span class="bp">Console.WriteLine("Hit Count Breakpoint Hit!");</span></div>
<div style="height:6.8px"></div>
<div class="pk" style="height:94px"><div class="bs">Breakpoint Settings ✕</div>
<div class="x" style="top:6px">Location: HomeController.cs, Line: 29, Character: 13, Must match source</div>
<div class="x" style="top:14px"><span class="cb"></span>Conditions</div>
<div class="inp" style="left:18px;top:21px;width:62px">Conditional Expression     ▾</div>
<div class="inp" style="left:83px;top:21px;width:44px">Is true             ▾</div>
<div class="inp" style="left:130px;top:21px;width:212px"><span style="background:#3a6fd8;color:#fff">Hitcount</span></div>
<div class="x" style="left:350px;top:22px">Cancel</div>
<div class="x" style="left:18px;top:29px;color:#99a">Add condition</div>
<div class="x" style="top:40px"><span class="cb"></span>Actions</div>
<div class="x" style="top:50px"><span class="cb"></span>Disable breakpoint once hit</div>
<div class="x" style="top:60px"><span class="cb"></span>Only enable when the following breakpoint is hit:</div>
<div class="btn" style="left:8px;top:70px;width:28px">Close</div>
</div>
<div style="height:2.4px"></div>
<div class="l"><span class="n">30</span>            <span class="c2">return</span> <span class="m">View</span>();</div>
<div class="l"><span class="n">31</span>        }</div>
<div class="l"><span class="n">32</span></div>
<div class="cl">0 references</div>
  </div>
  <div class="ring" style="top:42px"></div>
  <div class="ring" style="top:109px"></div>
 </div>
 <div class="sep"></div>
 <div class="se"><div class="tb2">⇄ ▷ ▾ ↶ ▣ ▣  ✎ ▾  ⚲ ▬</div><div class="sr">Search Solution Explorer (Ctrl+;)</div>
  <div class="i" style="padding-left:4px">▣ Solution 'Module4MVCAppDebugging' (1 of 1</div>
  <div class="i" style="padding-left:6px;font-weight:bold">◢ ▣ Module4MVCAppDebugging</div>
  <div class="i" style="padding-left:12px">▷ ⊕ Connected Services</div>
  <div class="i" style="padding-left:12px">▷ ⊞ Dependencies</div>
  <div class="i" style="padding-left:12px">▷ ▣ Properties</div>
  <div class="i" style="padding-left:12px">▷ ⊕ wwwroot</div>
  <div class="i" style="padding-left:12px">◢ ▣ Controllers</div>
  <div class="i" style="padding-left:16px;background:#e8e9f0">▷ C# HomeController.cs</div>
  <div class="i" style="padding-left:12px">▷ ▣ Models</div>
  <div class="i" style="padding-left:12px">▷ ▣ Views</div>
  <div class="i" style="padding-left:12px">▷ ▣ appsettings.json</div>
  <div class="i" style="padding-left:12px">▷ C# Program.cs</div>
 </div>
 <div class="hs">  110 %  ▾   ● No issues found        ✎ ▾                                                                                                  Ln: 29  Ch: 13   SPC   CRLF</div>
 <div class="ob">Package Manager Console   Error List   Output</div>
 <div class="sb">☐ Ready                                                                                                                                      ↑ Add to Source Control ▾     ▣ Select Repository ▾</div>
</div>

</body></html>
